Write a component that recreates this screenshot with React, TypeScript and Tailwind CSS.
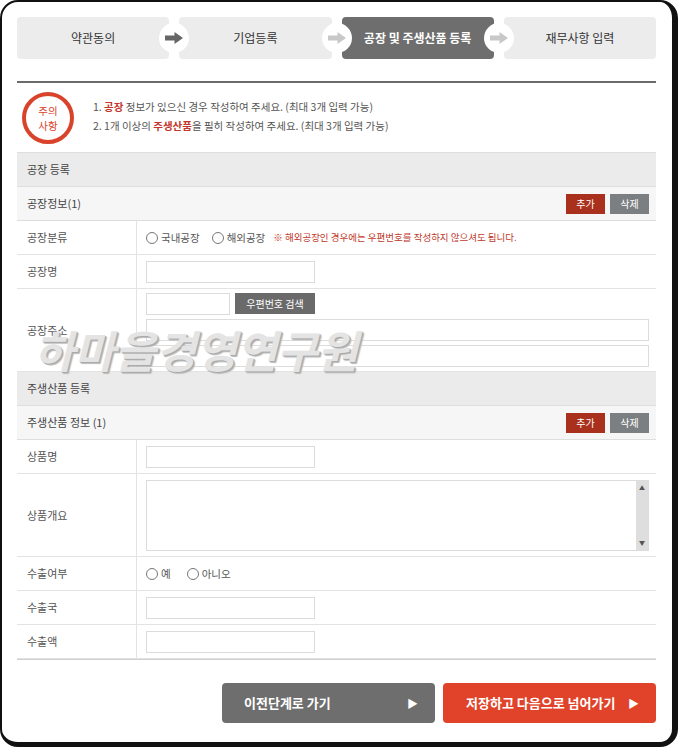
import React from "react";

const font = { fontFamily: '"Noto Sans CJK KR", "Noto Sans", sans-serif' };

const steps = ["약관동의", "기업등록", "공장 및 주생산품 등록", "재무사항 입력"];

function Arrow({ color }: { color: string }) {
  return (
    <svg width="18" height="12" viewBox="0 0 18 12">
      <path d="M0 3.5h9.5V0L18 6l-8.5 6V8.5H0z" fill={color} />
    </svg>
  );
}

function Input({ w = "w-[169px]" }: { w?: string }) {
  return <div className={`${w} h-[22px] border border-[#dcdcdc] bg-white`} />;
}

function Radio({ label }: { label: string }) {
  return (
    <span className="flex items-center gap-[3px]">
      <span className="w-[12px] h-[12px] rounded-full border border-[#777] bg-white" />
      <span>{label}</span>
    </span>
  );
}

function Row({ label, h = "h-[34px]", children }: { label: string; h?: string; children?: React.ReactNode }) {
  return (
    <div className={`flex ${h} border-b border-[#e3e3e3]`}>
      <div className="w-[120px] shrink-0 border-r border-[#e3e3e3] pl-[10px] flex items-center text-[#555]">{label}</div>
      <div className="flex-1 pl-[9px] pr-[7px] flex items-center">{children}</div>
    </div>
  );
}

function SubHeader({ title }: { title: string }) {
  return (
    <>
      <div className="h-[34px] bg-[#ebebeb] border-b border-[#dedede] pl-[10px] flex items-center text-[#444]">{title.split("|")[0]}</div>
      <div className="h-[34px] bg-[#f6f6f6] border-b border-[#dedede] pl-[10px] pr-[7px] flex items-center justify-between text-[#444]">
        <span>{title.split("|")[1]}</span>
        <div className="flex gap-[5px]">
          <span className="w-[39px] h-[20px] bg-[#a9301d] text-white flex items-center justify-center text-[10px]">추가</span>
          <span className="w-[39px] h-[20px] bg-[#7b7f82] text-white flex items-center justify-center text-[10px]">삭제</span>
        </div>
      </div>
    </>
  );
}

export default function App() {
  return (
    <div className="w-[678px] h-[747px] bg-white" style={font}>
      <div className="relative w-[678px] h-[747px] box-border border-l-2 border-t-2 border-r-[6px] border-b-[5px] border-[#111] rounded-[18px] bg-white pl-[15px] pr-[16px] pt-[15px] text-[11px]">
        {/* steps */}
        <div className="flex items-center h-[42px]">
          {steps.map((s, i) => (
            <React.Fragment key={s}>
              <div
                className={`flex-1 h-[42px] rounded-[4px] flex items-center justify-center text-[12px] ${
                  i === 2 ? "bg-[#6e6e6e] text-white font-bold" : "bg-[#ececec] text-[#333]"
                }`}
              >
                {s}
              </div>
              {i < 3 && (
                <div className="relative z-10 -mx-[10px] w-[30px] h-[30px] shrink-0 rounded-full bg-white flex items-center justify-center">
                  <Arrow color={i === 0 ? "#666" : "#c8c8c8"} />
                </div>
              )}
            </React.Fragment>
          ))}
        </div>

        <div className="mt-[22px] h-[2px] bg-[#6b6b6b]" />

        {/* notice */}
        <div className="h-[69px] flex items-center pl-[5px]">
          <div className="w-[52px] h-[52px] rounded-full border-[4px] border-[#d9432c] flex flex-col items-center justify-center text-[#d9432c] text-[10.5px] leading-[15px]">
            <span>주의</span>
            <span>사항</span>
          </div>
          <div className="ml-[19px] text-[#555] text-[10.5px] leading-[19px] -mt-[4px]">
            <div>
              1. <b className="text-[#c2372b]">공장</b> 정보가 있으신 경우 작성하여 주세요. (최대 3개 입력 가능)
            </div>
            <div>
              2. 1개 이상의 <b className="text-[#c2372b]">주생산품</b>을 필히 작성하여 주세요. (최대 3개 입력 가능)
            </div>
          </div>
        </div>

        {/* form */}
        <div className="border-t border-[#dedede]">
          <SubHeader title="공장 등록|공장정보(1)" />
          <Row label="공장분류">
            <div className="flex items-center text-[#555] text-[10.5px]">
              <Radio label="국내공장" />
              <span className="ml-[12px]"><Radio label="해외공장" /></span>
              <span className="ml-[8px] text-[#c0392b] text-[9.5px]">※ 해외공장인 경우에는 우편번호를 작성하지 않으셔도 됩니다.</span>
            </div>
          </Row>
          <Row label="공장명">
            <Input />
          </Row>
          <Row label="공장주소" h="h-[83px]">
            <div className="flex-1 flex flex-col gap-[4px]">
              <div className="flex gap-[5px]">
                <Input w="w-[84px]" />
                <span className="w-[80px] h-[21px] bg-[#6a6a6a] text-white text-[10px] flex items-center justify-center">우편번호 검색</span>
              </div>
              <Input w="w-full" />
              <Input w="w-full" />
            </div>
          </Row>
          <SubHeader title="주생산품 등록|주생산품 정보 (1)" />
          <Row label="상품명">
            <Input />
          </Row>
          <Row label="상품개요" h="h-[83px]">
            <div className="flex-1 h-[71px] border border-[#dcdcdc] bg-white flex justify-end">
              <div className="w-[12px] h-full bg-[#dedede] flex flex-col items-center justify-between py-[4px] text-[6px] text-[#555] leading-none">
                <span>▲</span>
                <span>▼</span>
              </div>
            </div>
          </Row>
          <Row label="수출여부">
            <div className="flex items-center text-[#555] text-[10.5px]">
              <Radio label="예" />
              <span className="ml-[16px]"><Radio label="아니오" /></span>
            </div>
          </Row>
          <Row label="수출국">
            <Input />
          </Row>
          <div className="border-b border-[#cfcfcf]">
            <Row label="수출액">
              <Input />
            </Row>
          </div>
        </div>

        {/* buttons */}
        <div className="mt-[23px] flex justify-end gap-[8px]">
          <div className="w-[213px] h-[40px] rounded-[4px] bg-[#6e6e6e] text-white text-[13px] font-bold flex items-center justify-between pl-[22px] pr-[17px]">
            <span>이전단계로 가기</span>
            <span className="text-[11px]">▶</span>
          </div>
          <div className="w-[213px] h-[40px] rounded-[4px] bg-[#e0432a] text-white text-[13px] font-bold flex items-center justify-between pl-[23px] pr-[17px]">
            <span>저장하고 다음으로 넘어가기</span>
            <span className="text-[11px]">▶</span>
          </div>
        </div>

        {/* watermark */}
        <div className="absolute left-[32px] top-[314px] text-[44px] font-bold italic text-[#e4e4e4] [text-shadow:1px_1px_0_#aaa,2px_2px_1px_#bbb] pointer-events-none">
          하마을경영연구원
        </div>
      </div>
    </div>
  );
}
